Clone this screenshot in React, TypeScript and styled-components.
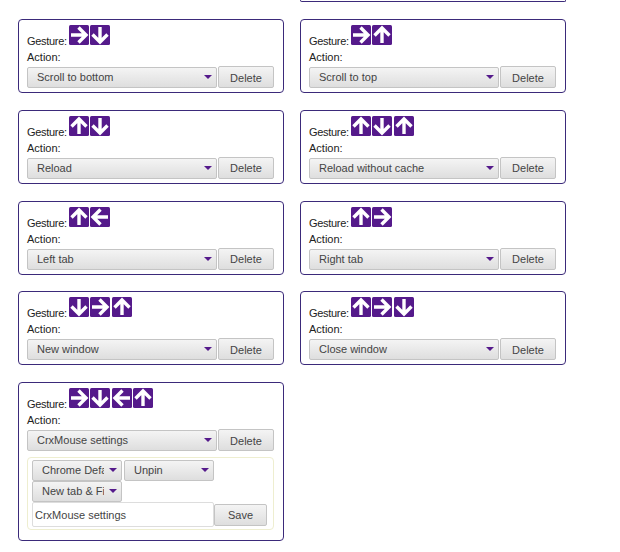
import React from 'react'
import styled, { createGlobalStyle } from 'styled-components'

const GlobalStyle = createGlobalStyle`
    html, body {
        margin: 0;
        padding: 0;
        background: #fff;
        overflow: hidden;
    }
    body {
        font-family: "Liberation Sans", Arial, sans-serif;
        font-size: 11px;
        color: #222;
    }
`

const Page = styled.div`
    display: flex;
    align-items: flex-start;
    gap: 16px;
    padding-left: 18px;
    width: 620px;
    height: 552px;
    box-sizing: border-box;
    overflow: hidden;
`

const Column = styled.div`
    display: flex;
    flex-direction: column;
    gap: 16.75px;
    width: 266px;
    padding-top: 19px;
`

const RightColumn = styled(Column)`
    padding-top: 0;
`

const CutCard = styled.div`
    height: 1.25px;
    border: 1px solid #3b2a7a;
    border-top: none;
    border-radius: 0 0 4px 4px;
`

const Card = styled.section`
    box-sizing: border-box;
    width: 266px;
    min-height: 74px;
    padding: 4px 9px 4px 8px;
    border: 1px solid #3b2a7a;
    border-radius: 4px;
    background: #fff;
`

const GestureRow = styled.div`
    display: flex;
    align-items: flex-end;
    height: 22px;
    line-height: 14px;
`

const GestureLabel = styled.span`
    margin-right: 2px;
    margin-bottom: -2px;
    letter-spacing: -0.3px;
`

const ArrowBox = styled.svg`
    display: block;
    flex: none;
    width: 20px;
    height: 20px;
    margin-right: 1.5px;
    margin-bottom: 1px;
`

const ActionLabel = styled.div`
    height: 15px;
    line-height: 15px;
    margin-top: 4px;
`

const ActionRow = styled.div`
    display: flex;
    align-items: flex-end;
    gap: 1px;
    margin-top: 1px;
`

const SelectBox = styled.div<{ $width: number }>`
    position: relative;
    box-sizing: border-box;
    width: ${props => props.$width}px;
    height: 21px;
    padding: 0 17px 0 9px;
    line-height: 19px;
    color: #444;
    white-space: nowrap;
    border: 1px solid #c4c4c4;
    border-radius: 2px;
    background: linear-gradient(#f4f4f4, #dedede);

    &::after {
        content: "";
        position: absolute;
        right: 4px;
        top: 7px;
        border-left: 4px solid transparent;
        border-right: 4px solid transparent;
        border-top: 4px solid #551a8b;
    }
`

const SelectText = styled.span`
    display: block;
    overflow: hidden;
`

const ActionButton = styled.button<{ $width: number }>`
    box-sizing: border-box;
    width: ${props => props.$width}px;
    height: 22px;
    padding: 1px 0 0;
    font: inherit;
    color: #444;
    border: 1px solid #c4c4c4;
    border-radius: 2px;
    background: linear-gradient(#f4f4f4, #dedede);
`

const DetailPanel = styled.div`
    box-sizing: border-box;
    width: 247px;
    margin-top: 6px;
    margin-bottom: 6px;
    padding: 2px 4px 2px 4px;
    border: 1px solid #eeeed0;
    border-radius: 4px;
`

const DetailRow = styled.div`
    display: flex;
    align-items: center;
    gap: 2px;
`

const TitleRow = styled(DetailRow)`
    gap: 0;
`

const TitleInput = styled.input`
    box-sizing: border-box;
    width: 182px;
    height: 25px;
    padding: 0 2px;
    font: inherit;
    color: #444;
    border: 1px solid #ddd;
    border-radius: 2px;
    background: #fff;
    outline: none;
`

type Direction = 'up' | 'down' | 'left' | 'right'

const rotation: Record<Direction, number> = { up: 0, right: 90, down: 180, left: 270 }

function Arrow({ dir }: { dir: Direction }) {
    return (
        <ArrowBox viewBox="0 0 20 20">
            <rect width="20" height="20" rx="1.5" fill="#551a8b" />
            <path
                d="M10 18V4M2.5 10.5 10 3l7.5 7.5"
                transform={`rotate(${rotation[dir]} 10 10)`}
                fill="none"
                stroke="#fff"
                strokeWidth="3.4"
            />
        </ArrowBox>
    )
}

function GestureLine({ dirs }: { dirs: Direction[] }) {
    return (
        <GestureRow>
            <GestureLabel>Gesture:</GestureLabel>
            {dirs.map((d, i) => <Arrow dir={d} key={i} />)}
        </GestureRow>
    )
}

function GestureCard({ dirs, action, children }: { dirs: Direction[], action: string, children?: React.ReactNode }) {
    return (
        <Card>
            <GestureLine dirs={dirs} />
            <ActionLabel>Action:</ActionLabel>
            <ActionRow>
                <SelectBox $width={190}><SelectText>{action}</SelectText></SelectBox>
                <ActionButton $width={56}>Delete</ActionButton>
            </ActionRow>
            {children}
        </Card>
    )
}

const leftCards: { dirs: Direction[], action: string }[] = [
    { dirs: ['right', 'down'], action: 'Scroll to bottom' },
    { dirs: ['up', 'down'], action: 'Reload' },
    { dirs: ['up', 'left'], action: 'Left tab' },
    { dirs: ['down', 'right', 'up'], action: 'New window' },
]

const rightCards: { dirs: Direction[], action: string }[] = [
    { dirs: ['right', 'up'], action: 'Scroll to top' },
    { dirs: ['up', 'down', 'up'], action: 'Reload without cache' },
    { dirs: ['up', 'right'], action: 'Right tab' },
    { dirs: ['up', 'right', 'down'], action: 'Close window' },
]

function App() {
    return (
        <Page>
            <GlobalStyle />
            <Column>
                {leftCards.map(c => <GestureCard key={c.action} dirs={c.dirs} action={c.action} />)}
                <GestureCard dirs={['right', 'down', 'left', 'up']} action="CrxMouse settings">
                    <DetailPanel>
                        <DetailRow>
                            <SelectBox $width={90}><SelectText>Chrome Defa</SelectText></SelectBox>
                            <SelectBox $width={90}><SelectText>Unpin</SelectText></SelectBox>
                        </DetailRow>
                        <DetailRow>
                            <SelectBox $width={90}><SelectText>New tab &amp; Fi</SelectText></SelectBox>
                        </DetailRow>
                        <TitleRow>
                            <TitleInput defaultValue="CrxMouse settings" />
                            <ActionButton $width={53}>Save</ActionButton>
                        </TitleRow>
                    </DetailPanel>
                </GestureCard>
            </Column>
            <RightColumn>
                <CutCard />
                {rightCards.map(c => <GestureCard key={c.action} dirs={c.dirs} action={c.action} />)}
            </RightColumn>
        </Page>
    )
}

export default App
